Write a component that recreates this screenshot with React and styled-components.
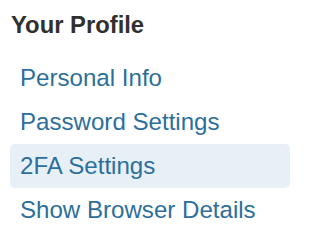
import React from 'react'
import styled, { createGlobalStyle } from 'styled-components'

const GlobalStyle = createGlobalStyle`
body {
    margin: 0;
    background-color: white;
    font-family: "Liberation Sans", Arial, sans-serif;
}
`

const Sidebar = styled.nav`
width: 280px;
padding: 10px;
`

const Title = styled.h2`
margin: 0 0 16px 1px;
font-size: 23.8px;
line-height: 30px;
font-weight: bold;
color: #303030;
`

const Menu = styled.ul`
list-style: none;
margin: 0;
padding: 0;
display: flex;
flex-direction: column;
`

const MenuItem = styled.li`
height: 44px;
display: flex;
align-items: center;
padding: 0 10px;
border-radius: 5px;
background-color: ${props => props.$active ? '#e7f0f7' : 'transparent'};

a {
    color: #2d6f9c;
    text-decoration: none;
    font-size: 24.1px;
    line-height: 44px;
    white-space: nowrap;
}
`

export default function App() {

    const items = [
        { id: 'personal', label: 'Personal Info' },
        { id: 'password', label: 'Password Settings' },
        { id: '2fa', label: '2FA Settings' },
        { id: 'browser', label: 'Show Browser Details' }
    ]

    const active = '2fa'

    return (<>
        <GlobalStyle />
        <Sidebar>
            <Title>Your Profile</Title>
            <Menu>
                {items.map((item) => {
                    return <MenuItem key={item.id} $active={item.id === active}>
                        <a href={`#${item.id}`}>{item.label}</a>
                    </MenuItem>
                })}
            </Menu>
        </Sidebar>
    </>
    )
}
